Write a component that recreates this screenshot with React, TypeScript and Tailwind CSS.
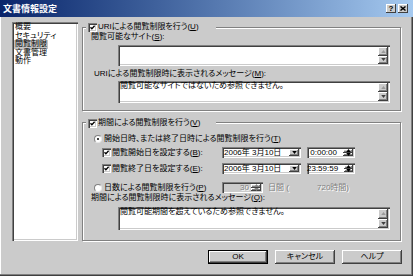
import React from "react";

const SUNKEN =
  "shadow-[inset_1px_1px_0_#808080,inset_2px_2px_0_#404040,inset_-1px_-1px_0_#ffffff,inset_-2px_-2px_0_#cbcbcb]";

function Check() {
  return (
    <span className="relative block w-[9px] h-[9px] shrink-0 bg-white shadow-[inset_1px_1px_0_#808080,inset_2px_2px_0_#404040,inset_-1px_-1px_0_#ffffff,inset_-2px_-2px_0_#cbcbcb]">
      <svg viewBox="0 0 9 9" className="absolute inset-0 w-[9px] h-[9px]">
        <path d="M2.5 4.2 L3.9 5.8 L6.6 2.8" stroke="#000" strokeWidth="1.3" fill="none" />
      </svg>
    </span>
  );
}

function Radio({ on }: { on?: boolean }) {
  return (
    <span className="relative block w-[8px] h-[8px] shrink-0 rounded-full bg-white border border-[#808080] border-b-[#e8e8e8] border-r-[#e8e8e8]">
      {on && <span className="absolute left-[2px] top-[2px] w-[2px] h-[2px] rounded-full bg-black" />}
    </span>
  );
}

function Arrow({ up, color }: { up?: boolean; color: string }) {
  return (
    <svg viewBox="0 0 6 4" className="w-[5px] h-[3px]">
      <path d={up ? "M0 4 L3 0 L6 4 Z" : "M0 0 L6 0 L3 4 Z"} fill={color} />
    </svg>
  );
}

function SmallBtn({ up, color }: { up?: boolean; color: string }) {
  return (
    <div className="flex-1 flex items-center justify-center bg-[#cbcbcb] shadow-[inset_-1px_-1px_0_#404040,inset_1px_1px_0_#ffffff,inset_-2px_-2px_0_#808080]">
      <Arrow up={up} color={color} />
    </div>
  );
}

function TextBox({ h, text }: { h: string; text?: string }) {
  return (
    <div className={"ml-[35px] w-[272px] flex bg-white " + h + " " + SUNKEN}>
      <div className="flex-1 pl-[2px] pt-[1px] leading-[8px] whitespace-nowrap">{text}</div>
      <div className="w-[12px] flex flex-col py-[2px] pr-[2px]">
        <SmallBtn up color="#9a9a9a" />
        <SmallBtn color="#404040" />
      </div>
    </div>
  );
}

function DateField({ text }: { text: string }) {
  return (
    <div className={"w-[79px] h-[11px] flex bg-white " + SUNKEN}>
      <div className="flex-1 pl-[2px] leading-[11px] whitespace-nowrap">{text}</div>
      <div className="w-[12px] flex flex-col py-[2px] pr-[2px]">
        <SmallBtn color="#000" />
      </div>
    </div>
  );
}

function TimeField({ text }: { text: string }) {
  return (
    <div className={"ml-[6px] w-[48px] h-[11px] flex bg-white " + SUNKEN}>
      <div className="flex-1 pr-[6px] text-right leading-[11px] whitespace-nowrap">{text}</div>
      <div className="w-[12px] flex flex-col py-[2px] pr-[2px]">
        <SmallBtn up color="#000" />
        <SmallBtn color="#000" />
      </div>
    </div>
  );
}

function Btn({ label, def }: { label: string; def?: boolean }) {
  return (
    <div
      className={
        "w-[60px] h-[14px] flex items-center justify-center bg-[#cbcbcb] leading-[10px] " +
        (def
          ? "shadow-[inset_0_0_0_1px_#000000,inset_-2px_-2px_0_#404040,inset_2px_2px_0_#ffffff,inset_-3px_-3px_0_#808080]"
          : "shadow-[inset_-1px_-1px_0_#404040,inset_1px_1px_0_#ffffff,inset_-2px_-2px_0_#808080]")
      }
    >
      {label}
    </div>
  );
}

const U = ({ c }: { c: string }) => <span className="underline">{c}</span>;

export default function App() {
  return (
    <div className="w-[413px] h-[276px] bg-[#cbcbcb] flex flex-col overflow-hidden text-black text-[8px] leading-[10px] font-['Liberation_Sans','Noto_Sans_CJK_JP',sans-serif] [font-feature-settings:'palt'] shadow-[inset_-1px_-1px_0_#404040,inset_-2px_-2px_0_#808080,inset_1px_0_0_#ffffff]">
      {/* title bar */}
      <div className="h-[17px] shrink-0 flex items-center pl-[3px] pr-[5px] bg-linear-to-r from-[#0a246a] to-[#a6caf0]">
        <span className="text-white font-bold text-[9px] leading-[10px]">文書情報設定</span>
        <div className="ml-auto flex gap-[2px]">
          <div className="w-[10px] h-[9px] flex items-center justify-center bg-[#cbcbcb] shadow-[inset_-1px_-1px_0_#404040,inset_1px_1px_0_#ffffff] text-[8px] font-bold leading-[8px]">
            ?
          </div>
          <div className="w-[10px] h-[9px] flex items-center justify-center bg-[#cbcbcb] shadow-[inset_-1px_-1px_0_#404040,inset_1px_1px_0_#ffffff]">
            <svg viewBox="0 0 6 5" className="w-[6px] h-[5px]">
              <path d="M0.5 0.5 L5.5 4.5 M5.5 0.5 L0.5 4.5" stroke="#000" strokeWidth="1.4" />
            </svg>
          </div>
        </div>
      </div>

      {/* body */}
      <div className="flex pt-[5px] pl-[12px]">
        {/* list */}
        <div className={"w-[66px] h-[219px] bg-white pt-[1px] pl-[2px] flex flex-col items-start " + SUNKEN}>
          <span className="h-[8.5px] leading-[8.5px] px-[1px]">概要</span>
          <span className="h-[8.5px] leading-[8.5px] px-[1px]">セキュリティ</span>
          <span className="h-[8.5px] leading-[8.5px] px-[1px] bg-[#c4c4c4]">閲覧制限</span>
          <span className="h-[8.5px] leading-[8.5px] px-[1px]">文書管理</span>
          <span className="h-[8.5px] leading-[8.5px] px-[1px]">動作</span>
        </div>

        {/* right column */}
        <div className="ml-[4px] w-[320px] flex flex-col">
          {/* group 1 */}
          <div className="relative mt-[5px] w-[319px] h-[84px] border border-[#808080] shadow-[inset_1px_1px_0_#ffffff,1px_1px_0_#ffffff] flex flex-col">
            <div className="absolute left-[3px] top-[-6px] w-[130px] h-[10px] bg-[#cbcbcb] flex items-center pl-[2px]">
              <Check />
              <span className="ml-[1px] whitespace-nowrap">
                URIによる閲覧制限を行う(<U c="U" />)
              </span>
            </div>
            <div className="mt-[4px] h-[10px] ml-[8px] whitespace-nowrap">
              閲覧可能なサイト(<U c="S" />):
            </div>
            <div className="mt-[3px]">
              <TextBox h="h-[21px]" />
            </div>
            <div className="mt-[3px] h-[10px] ml-[11px] whitespace-nowrap">
              URIによる閲覧制限時に表示されるメッセージ(<U c="M" />):
            </div>
            <div className="mt-[2px]">
              <TextBox h="h-[22px]" text="閲覧可能なサイトではないため参照できません。" />
            </div>
          </div>

          {/* group 2 */}
          <div className="relative mt-[11px] w-[319px] h-[119px] border border-[#808080] shadow-[inset_1px_1px_0_#ffffff,1px_1px_0_#ffffff] flex flex-col">
            <div className="absolute left-[3px] top-[-5px] w-[130px] h-[10px] bg-[#cbcbcb] flex items-center pl-[2px]">
              <Check />
              <span className="ml-[1px] whitespace-nowrap">
                期間による閲覧制限を行う(<U c="V" />)
              </span>
            </div>

            <div className="mt-[11px] h-[10px] ml-[11px] flex items-center">
              <Radio on />
              <span className="ml-[2px] whitespace-nowrap">
                開始日時、または終了日時による閲覧制限を行う(<U c="T" />)
              </span>
            </div>

            <div className="mt-[3px] h-[11px] ml-[19px] flex items-center">
              <div className="w-[120px] flex items-center">
                <Check />
                <span className="ml-[1px] whitespace-nowrap">
                  閲覧開始日を設定する(<U c="B" />):
                </span>
              </div>
              <DateField text="2006年  3月10日" />
              <TimeField text="0:00:00" />
            </div>

            <div className="mt-[5px] h-[11px] ml-[19px] flex items-center">
              <div className="w-[120px] flex items-center">
                <Check />
                <span className="ml-[1px] whitespace-nowrap">
                  閲覧終了日を設定する(<U c="E" />):
                </span>
              </div>
              <DateField text="2006年  3月10日" />
              <TimeField text="23:59:59" />
            </div>

            <div className="mt-[8px] h-[11px] ml-[11px] flex items-center">
              <div className="w-[128px] flex items-center">
                <Radio />
                <span className="ml-[2px] whitespace-nowrap">
                  日数による閲覧制限を行う(<U c="P" />)
                </span>
              </div>
              <div className={"w-[41px] h-[11px] flex bg-[#cbcbcb] " + SUNKEN}>
                <div className="flex-1 pr-[2px] text-right leading-[11px] text-[#808080] [text-shadow:1px_1px_0_#ffffff]">
                  30
                </div>
                <div className="w-[12px] flex flex-col py-[2px] pr-[2px]">
                  <SmallBtn up color="#808080" />
                  <SmallBtn color="#808080" />
                </div>
              </div>
              <span className="ml-[5px] w-[49px] whitespace-nowrap text-[#808080] [text-shadow:1px_1px_0_#ffffff]">
                日間 (
              </span>
              <span className="whitespace-nowrap text-[#808080] [text-shadow:1px_1px_0_#ffffff]">720時間)</span>
            </div>

            <div className="h-[10px] ml-[8px] whitespace-nowrap">
              期間による閲覧制限時に表示されるメッセージ(<U c="Q" />):
            </div>
            <div className="mt-[4px]">
              <TextBox h="h-[23px]" text="閲覧可能期間を超えているため参照できません。" />
            </div>
          </div>
        </div>
      </div>

      {/* buttons */}
      <div className="mt-[9px] flex justify-end gap-[7px] pr-[11px]">
        <Btn label="OK" def />
        <Btn label="キャンセル" />
        <Btn label="ヘルプ" />
      </div>
    </div>
  );
}
